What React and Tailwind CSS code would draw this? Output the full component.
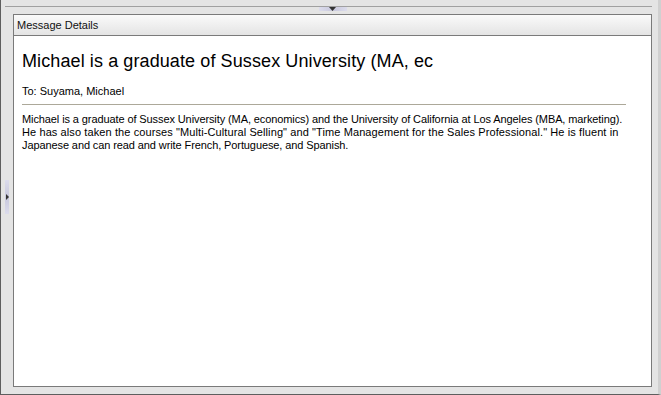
import React from 'react';

const font = { fontFamily: '"Liberation Sans", Arial, sans-serif' };

const lines = [
  ['Michael is a graduate of Sussex University (MA, economics) and the University of California at Los Angeles (MBA, marketing).', 'tracking-[-0.1px]'],
  ['He has also taken the courses "Multi-Cultural Selling" and "Time Management for the Sales Professional." He is fluent in', 'tracking-[0.1px]'],
  ['Japanese and can read and write French, Portuguese, and Spanish.', 'tracking-[-0.1px]'],
];

const TopSplitter = () => (
  <div className="h-[14px] flex flex-col">
    <div className="h-[7px] ml-[4px] mr-[6px] border-b border-[#a0a0a0]" />
    <div className="flex justify-center pl-[6px]">
      <div className="w-[28px] h-[4px] bg-gradient-to-r from-[#dcdcec] via-[#c8c8dc] to-[#dcdcec] flex justify-center">
        <svg width="7" height="4" viewBox="0 0 7 4">
          <path d="M0 0h7L3.5 4z" fill="#333" />
        </svg>
      </div>
    </div>
  </div>
);

const SideSplitter = () => (
  <div className="w-[12px] flex flex-col justify-center items-center pb-[8px]">
    <div className="w-[4px] h-[34px] bg-gradient-to-b from-[#dcdcec] via-[#c8c8dc] to-[#dcdcec] flex items-center justify-center">
      <svg width="3" height="6" viewBox="0 0 3 6">
        <path d="M0 0v6l3-3z" fill="#333" />
      </svg>
    </div>
  </div>
);

export default function App() {
  return (
    <div
      className="w-[661px] h-[395px] bg-[#e4e4e4] border-l border-b border-r-[3px] border-[#5e5e5e] border-r-[#d0d0d0] flex flex-col overflow-hidden"
      style={font}
    >
      <TopSplitter />
      <div className="flex-1 flex pb-[7px] pr-[6px]">
        <SideSplitter />
        <div className="flex-1 flex flex-col border border-[#7a7a7a] bg-white">
          <div className="h-[21px] flex items-center pl-[3px] text-[11px] text-[#111] bg-gradient-to-b from-[#fafafa] to-[#e4e4e4] border-b border-[#7a7a7a]">
            Message Details
          </div>
          <div className="flex-1 px-[8px] pt-[13px]">
            <div className="text-[18px] leading-[24px] text-black tracking-[0.1px]">
              Michael is a graduate of Sussex University (MA, ec
            </div>
            <div className="text-[11px] leading-[13px] text-black mt-[12px]">To: Suyama, Michael</div>
            <div className="h-px bg-[#aca899] mt-[6px] mr-[17px]" />
            <div className="text-[11px] leading-[13px] text-black mt-[8px] whitespace-nowrap">
              {lines.map(([l, t]) => (
                <div key={l} className={t}>{l}</div>
              ))}
            </div>
          </div>
        </div>
      </div>
    </div>
  );
}
